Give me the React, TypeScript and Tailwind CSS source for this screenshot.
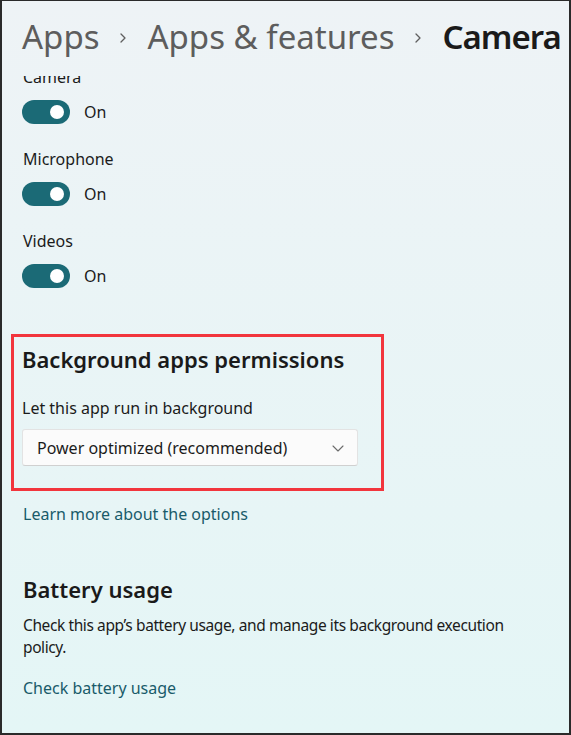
import React from 'react';

const font = { fontFamily: '"Noto Sans", "Open Sans", Arial, sans-serif' };

function Chevron() {
  return (
    <svg width="10" height="14" viewBox="0 0 10 14" className="mx-[19px] mt-[2px] shrink-0">
      <path d="M3 3 L7 7 L3 11" fill="none" stroke="#5f5f5f" strokeWidth="1.3" strokeLinecap="round" strokeLinejoin="round" />
    </svg>
  );
}

function Toggle() {
  return (
    <div className="-ml-[1px] flex items-center gap-[14px]">
      <div className="flex h-6 w-12 items-center justify-end rounded-full bg-[#1b6a76] pr-[6px]">
        <div className="h-[14px] w-[14px] rounded-full bg-white" />
      </div>
      <span className="text-[16px] text-[#1b1b1b]">On</span>
    </div>
  );
}

function PermissionRow({ label }: { label: string }) {
  return (
    <div className="flex flex-col gap-[13px]">
      <div className="text-[16px] leading-5 text-[#1b1b1b]">{label}</div>
      <Toggle />
    </div>
  );
}

export default function App() {
  return (
    <div
      style={font}
      className="flex h-[735px] w-[571px] flex-col overflow-hidden border-x-2 border-b-2 border-t border-[#2a2a2a] bg-gradient-to-b from-[#eef3f6] to-[#e4f6f6]"
    >
      {/* Breadcrumb header */}
      <div className="flex h-[75px] shrink-0 items-start pl-[20px] pt-[14px]">
        <div className="flex items-center text-[33px] leading-[44px]">
          <span className="text-[#5d5d5d]">Apps</span>
          <Chevron />
          <span className="text-[#5d5d5d]">Apps &amp; features</span>
          <Chevron />
          <span className="font-semibold tracking-[-1px] text-[#1a1a1a]">Camera</span>
        </div>
      </div>

      {/* Scrolled content */}
      <div className="flex-1 overflow-hidden">
        <div className="-mt-[9px] flex flex-col pl-[21px]">
          <div className="flex flex-col gap-[25px]">
            <PermissionRow label="Camera" />
            <PermissionRow label="Microphone" />
            <PermissionRow label="Videos" />
          </div>

          <div className="-ml-[12px] mt-[46px] w-[373px] border-[3px] border-[#f2353d] pb-[22px] pl-[8px] pt-[8px]">
            <h2 className="text-[22px] font-semibold leading-7 text-[#1a1a1a]">Background apps permissions</h2>
            <div className="mt-[25px] text-[16px] leading-5 text-[#1b1b1b]">Let this app run in background</div>
            <div className="mt-[11px] flex h-[37px] w-[336px] items-center justify-between rounded-[3px] border border-[#e3e3e3] border-b-[#d0d0d0] bg-[#fbfbfb] pl-[14px] pr-[12px]">
              <span className="text-[16px] text-[#1b1b1b]">Power optimized (recommended)</span>
              <svg width="14" height="10" viewBox="0 0 14 10">
                <path d="M2 3 L7 8 L12 3" fill="none" stroke="#6b6b6b" strokeWidth="1.1" strokeLinecap="round" strokeLinejoin="round" />
              </svg>
            </div>
          </div>

          <a className="mt-[13px] text-[16px] leading-5 text-[#195b6a]">Learn more about the options</a>

          <h2 className="mt-[51px] text-[22px] font-semibold leading-7 text-[#1a1a1a]">Battery usage</h2>
          <p className="mt-[11px] w-[520px] text-[15.5px] leading-[22px] tracking-[-0.4px] text-[#1b1b1b]">
            Check this app’s battery usage, and manage its background execution policy.
          </p>
          <a className="mt-[20px] text-[16px] leading-5 text-[#195b6a]">Check battery usage</a>
        </div>
      </div>
    </div>
  );
}
